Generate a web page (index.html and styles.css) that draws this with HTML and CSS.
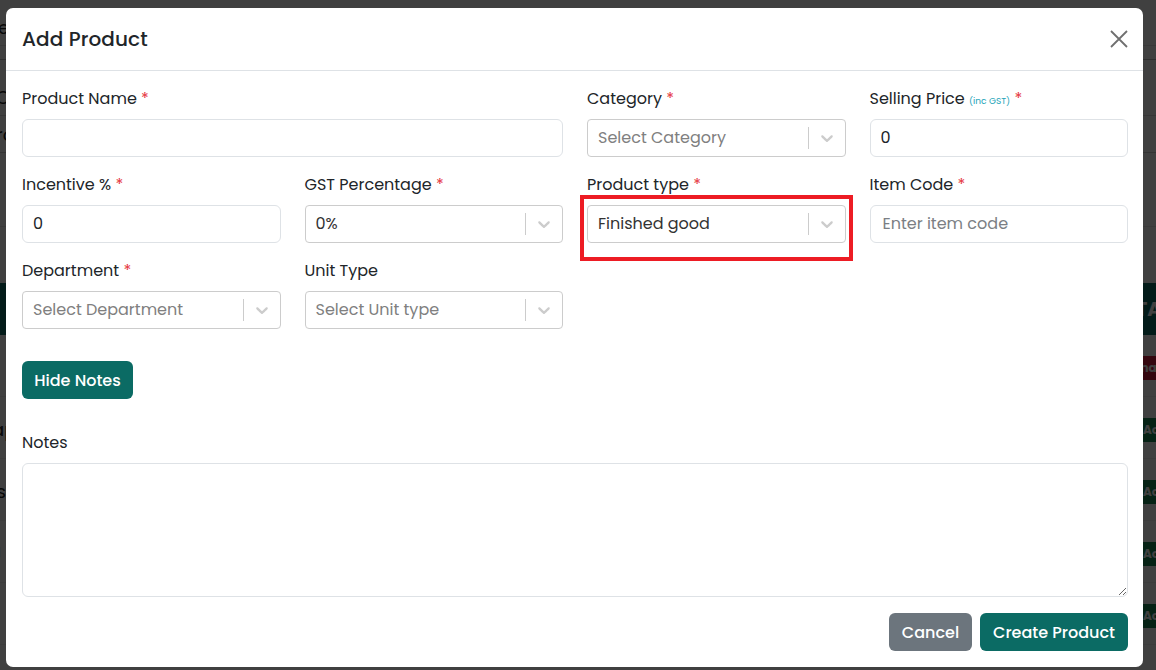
FILE: index.html
```html
<!DOCTYPE html>
<html lang="en">
<head>
<meta charset="utf-8">
<title>Add Product</title>
<link rel="stylesheet" href="styles.css">
</head>
<body>
<div class="page">
  <div class="page-top"><span class="pt-text">e</span></div>
  <div class="page-row r1"></div>
  <div class="page-row r2"><span>C</span></div>
  <div class="page-row r3"><span>ro</span></div>
  <div class="page-row r4"></div>
  <div class="page-row r5"></div>
  <div class="page-band"><span class="band-right">TA</span></div>
  <div class="trow"><span class="tl"></span><span class="badge red">Inac</span></div>
  <div class="trow"><span class="tl">ap</span><span class="badge green">Act</span></div>
  <div class="trow"><span class="tl">is</span><span class="badge green">Act</span></div>
  <div class="trow"><span class="tl">J</span><span class="badge green">Act</span></div>
  <div class="trow"><span class="tl"></span><span class="badge green">Act</span></div>
</div>
<div class="overlay"></div>

<div class="modal">
  <div class="modal-header">
    <h1 class="modal-title">Add Product</h1>
    <button class="close" aria-label="Close">
      <svg width="18" height="18" viewBox="0 0 18 18"><path d="M1 1L17 17M17 1L1 17" stroke="#6f6f6f" stroke-width="1.8" fill="none"/></svg>
    </button>
  </div>
  <div class="modal-body">
    <div class="grid">
      <div class="field span2">
        <label class="lbl">Product Name <span class="req">*</span></label>
        <input class="inp" type="text">
      </div>
      <div class="field">
        <label class="lbl">Category <span class="req">*</span></label>
        <div class="sel"><span class="sel-val ph">Select Category</span><span class="sep"></span><span class="chev"><svg width="20" height="20" viewBox="0 0 20 20"><path d="M4.516 7.548c0.436-0.446 1.043-0.481 1.576 0l3.908 3.747 3.908-3.747c0.533-0.481 1.141-0.446 1.574 0 0.436 0.445 0.408 1.197 0 1.615-0.406 0.418-4.695 4.502-4.695 4.502-0.217 0.223-0.502 0.335-0.787 0.335s-0.57-0.112-0.789-0.335c0 0-4.287-4.084-4.695-4.502s-0.436-1.17 0-1.615z"/></svg></span></div>
      </div>
      <div class="field">
        <label class="lbl">Selling Price <span class="inc">(inc GST)</span> <span class="req">*</span></label>
        <input class="inp num" type="text" value="0">
      </div>

      <div class="field">
        <label class="lbl">Incentive % <span class="req">*</span></label>
        <input class="inp num" type="text" value="0">
      </div>
      <div class="field">
        <label class="lbl">GST Percentage <span class="req">*</span></label>
        <div class="sel"><span class="sel-val">0%</span><span class="sep"></span><span class="chev"><svg width="20" height="20" viewBox="0 0 20 20"><path d="M4.516 7.548c0.436-0.446 1.043-0.481 1.576 0l3.908 3.747 3.908-3.747c0.533-0.481 1.141-0.446 1.574 0 0.436 0.445 0.408 1.197 0 1.615-0.406 0.418-4.695 4.502-4.695 4.502-0.217 0.223-0.502 0.335-0.787 0.335s-0.57-0.112-0.789-0.335c0 0-4.287-4.084-4.695-4.502s-0.436-1.17 0-1.615z"/></svg></span></div>
      </div>
      <div class="field">
        <label class="lbl">Product type <span class="req">*</span></label>
        <div class="sel"><span class="sel-val">Finished good</span><span class="sep"></span><span class="chev"><svg width="20" height="20" viewBox="0 0 20 20"><path d="M4.516 7.548c0.436-0.446 1.043-0.481 1.576 0l3.908 3.747 3.908-3.747c0.533-0.481 1.141-0.446 1.574 0 0.436 0.445 0.408 1.197 0 1.615-0.406 0.418-4.695 4.502-4.695 4.502-0.217 0.223-0.502 0.335-0.787 0.335s-0.57-0.112-0.789-0.335c0 0-4.287-4.084-4.695-4.502s-0.436-1.17 0-1.615z"/></svg></span></div>
      </div>
      <div class="field">
        <label class="lbl">Item Code <span class="req">*</span></label>
        <input class="inp" type="text" placeholder="Enter item code">
      </div>

      <div class="field">
        <label class="lbl">Department <span class="req">*</span></label>
        <div class="sel"><span class="sel-val ph">Select Department</span><span class="sep"></span><span class="chev"><svg width="20" height="20" viewBox="0 0 20 20"><path d="M4.516 7.548c0.436-0.446 1.043-0.481 1.576 0l3.908 3.747 3.908-3.747c0.533-0.481 1.141-0.446 1.574 0 0.436 0.445 0.408 1.197 0 1.615-0.406 0.418-4.695 4.502-4.695 4.502-0.217 0.223-0.502 0.335-0.787 0.335s-0.57-0.112-0.789-0.335c0 0-4.287-4.084-4.695-4.502s-0.436-1.17 0-1.615z"/></svg></span></div>
      </div>
      <div class="field">
        <label class="lbl">Unit Type</label>
        <div class="sel"><span class="sel-val ph">Select Unit type</span><span class="sep"></span><span class="chev"><svg width="20" height="20" viewBox="0 0 20 20"><path d="M4.516 7.548c0.436-0.446 1.043-0.481 1.576 0l3.908 3.747 3.908-3.747c0.533-0.481 1.141-0.446 1.574 0 0.436 0.445 0.408 1.197 0 1.615-0.406 0.418-4.695 4.502-4.695 4.502-0.217 0.223-0.502 0.335-0.787 0.335s-0.57-0.112-0.789-0.335c0 0-4.287-4.084-4.695-4.502s-0.436-1.17 0-1.615z"/></svg></span></div>
      </div>
    </div>

    <button class="btn btn-teal hide-notes">Hide Notes</button>

    <div class="notes">
      <label class="lbl">Notes</label>
      <textarea class="ta"></textarea>
    </div>

    <div class="footer">
      <button class="btn btn-gray">Cancel</button>
      <button class="btn btn-teal">Create Product</button>
    </div>
  </div>
</div>

<div class="highlight"></div>
</body>
</html>
```
FILE: styles.css
```css
* { box-sizing: border-box; }
html, body { margin: 0; padding: 0; }
body {
  width: 1156px;
  height: 670px;
  overflow: hidden;
  position: relative;
  font-family: "Poppins", "Open Sans", "Noto Sans", sans-serif;
  background: #ffffff;
  color: #212529;
}

/* background page behind the overlay */
.page { display: flex; flex-direction: column; font-size: 18px; color: #222; }
.page-top { height: 46px; padding: 14px 0 0 0; border-bottom: 1px solid #e4e4e4; }
.pt-text { margin-left: -2px; }
.page-row { border-bottom: 1px solid #dcdcdc; }
.page-row span { margin-left: -4px; }
.r1 { height: 14px; border-bottom: 1px solid #bdbdbd; }
.r2 { height: 56px; padding-top: 24px; }
.r3 { height: 37px; padding-top: 5px; border-bottom: 1px solid #cfcfcf; }
.r4 { height: 74px; border-bottom: 1px solid #e6e6e6; }
.r5 { height: 56px; border-bottom: none; }
.page-band { height: 52px; background: #0c6e66; color: #fff; font-weight: 700; font-size: 20px; display: flex; justify-content: flex-end; align-items: center; }
.band-right { margin-right: -6px; }
.trow { height: 62px; display: flex; justify-content: space-between; align-items: center; border-bottom: 1px solid #eee; padding-top: 4px; }
.tl { margin-left: -8px; font-size: 18px; }
.badge { font-size: 12px; color: #fff; padding: 3px 6px; font-weight: 700; margin-right: -14px; }
.badge.red { background: #d21f3c; }
.badge.green { background: #198754; }

.overlay { position: absolute; inset: 0; background: rgba(0,0,0,0.75); }

/* modal */
.modal {
  position: absolute;
  left: 6px; top: 8px;
  width: 1137px; height: 659px;
  background: #fff;
  border-radius: 7px;
  display: flex; flex-direction: column;
}
.modal-header {
  height: 63px;
  flex: none;
  border-bottom: 1px solid #dee2e6;
  display: flex; align-items: center; justify-content: space-between;
  padding: 0 14px 0 16px;
}
.modal-title { margin: 0; font-size: 20px; line-height: 30px; font-weight: 500; letter-spacing: 0.1px; color: #212529; }
.close { background: none; border: 0; padding: 0; width: 20px; height: 20px; display: flex; align-items: center; justify-content: center; }

.modal-body { padding: 16px 15px 16px 16px; flex: 1; display: flex; flex-direction: column; }

.grid {
  display: grid;
  grid-template-columns: repeat(4, 1fr);
  column-gap: 24px;
  row-gap: 16px;
}
.span2 { grid-column: span 2; }
.field { display: flex; flex-direction: column; }
.lbl { display: block; font-size: 16px; line-height: 24px; height: 24px; margin-bottom: 8px; color: #212529; white-space: nowrap; }
.req { color: #e5343d; }
.inc { font-size: 9px; line-height: 1; color: #1aa3b8; vertical-align: baseline; }

.inp {
  height: 38px;
  border: 1px solid #dee2e6;
  border-radius: 6px;
  padding: 0 12px 2px 12px;
  font-family: inherit;
  font-size: 16px;
  color: #212529;
  outline: none;
  width: 100%;
  margin: 0;
}
.inp.num { padding-left: 10px; }
.inp::placeholder { color: #7b7f84; }

.sel {
  height: 38px;
  border: 1px solid #cccccc;
  border-radius: 4px;
  display: flex; align-items: center;
  padding-left: 10px;
}
.sel-val { flex: 1; font-size: 16px; color: #333; white-space: nowrap; padding-bottom: 2px; }
.sel-val.ph { color: #808080; }
.sep { width: 1px; height: 22px; background: #cccccc; }
.chev { width: 36px; display: flex; justify-content: center; align-items: center; }
.chev svg { fill: #cccccc; }

.btn {
  font-family: inherit;
  font-size: 16px;
  font-weight: 500;
  color: #fff;
  border: 0;
  border-radius: 6px;
  height: 38px;
  padding: 0 12px;
}
.btn-teal { background: #0b6b64; }
.btn-gray { background: #6c757d; }
.hide-notes { align-self: flex-start; margin-top: 32px; width: 111px; flex: none; }

.notes { display: flex; flex-direction: column; margin-top: 32px; }
.ta {
  height: 134px;
  border: 1px solid #dee2e6;
  border-radius: 6px;
  resize: vertical;
  font-family: inherit;
  font-size: 16px;
  margin: 0;
}

.footer { display: flex; justify-content: flex-end; gap: 8px; margin-top: 16px; }
.footer .btn-gray { width: 83px; }
.footer .btn-teal { width: 148px; }

.highlight {
  position: absolute;
  left: 580px; top: 195px;
  width: 273px; height: 66px;
  border: 4px solid #ed1c24;
}
```
